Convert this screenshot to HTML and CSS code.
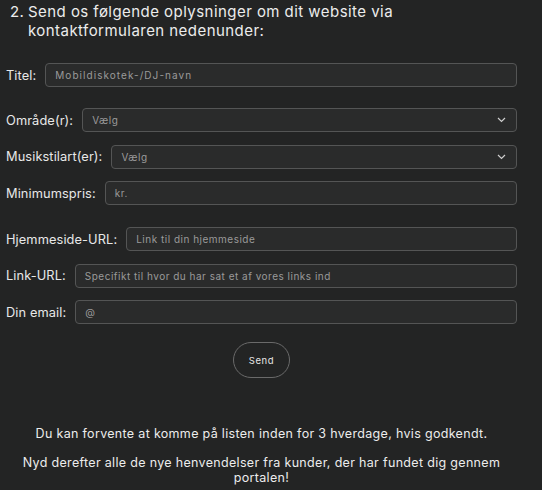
FILE: index.html
```html
<!DOCTYPE html>
<html lang="da">
<head>
<meta charset="utf-8">
<title>Kontaktformular</title>
<link rel="stylesheet" href="styles.css">
</head>
<body>
<div class="page">
  <div class="heading">
    <span class="num">2.</span>
    <span class="htext">Send os følgende oplysninger om dit website via kontaktformularen nedenunder:</span>
  </div>

  <form class="form">
    <div class="row r-titel">
      <label>Titel:</label>
      <div class="field"><span class="ph ph-wide">Mobildiskotek-/DJ-navn</span></div>
    </div>
    <div class="row r-omraade">
      <label>Område(r):</label>
      <div class="field select"><span class="ph">Vælg</span>
        <svg class="chev" width="9" height="6" viewBox="0 0 9 6"><path d="M1 1l3.5 3.5L8 1" fill="none" stroke="#cfcfcf" stroke-width="1.2"/></svg>
      </div>
    </div>
    <div class="row">
      <label>Musikstilart(er):</label>
      <div class="field select"><span class="ph">Vælg</span>
        <svg class="chev" width="9" height="6" viewBox="0 0 9 6"><path d="M1 1l3.5 3.5L8 1" fill="none" stroke="#cfcfcf" stroke-width="1.2"/></svg>
      </div>
    </div>
    <div class="row">
      <label>Minimumspris:</label>
      <div class="field"><span class="ph">kr.</span></div>
    </div>
    <div class="row r-spaced">
      <label>Hjemmeside-URL:</label>
      <div class="field"><span class="ph">Link til din hjemmeside</span></div>
    </div>
    <div class="row">
      <label>Link-URL:</label>
      <div class="field"><span class="ph">Specifikt til hvor du har sat et af vores links ind</span></div>
    </div>
    <div class="row">
      <label>Din email:</label>
      <div class="field"><span class="ph">@</span></div>
    </div>
    <div class="actions">
      <button type="button" class="send">Send</button>
    </div>
  </form>

  <div class="info">
    <p>Du kan forvente at komme på listen inden for 3 hverdage, hvis godkendt.</p>
    <p>Nyd derefter alle de nye henvendelser fra kunder, der har fundet dig gennem portalen!</p>
  </div>
</div>
</body>
</html>
```

FILE: styles.css
```css
html, body {
  margin: 0;
  padding: 0;
  background: #232424;
  color: #e6e6e6;
  font-family: Inter, "Noto Sans", sans-serif;
}

.page {
  width: 511px;
  padding-left: 6px;
}

.heading {
  display: flex;
  padding: 2px 0 0 4px;
  font-size: 15px;
  line-height: 19px;
  letter-spacing: 0.45px;
  color: #ececec;
}

.num {
  flex: 0 0 18px;
}

.htext {
  flex: 1;
  padding-right: 90px;
}

.form {
  display: flex;
  flex-direction: column;
}

.row {
  display: flex;
  align-items: center;
  gap: 9px;
  margin-top: 12.5px;
}

.r-titel { margin-top: 23px; }
.r-omraade { margin-top: 21px; }
.r-spaced { margin-top: 22px; }

.row label {
  font-size: 12.8px;
  letter-spacing: 0.1px;
  color: #e8e8e8;
  white-space: nowrap;
}

.field {
  flex: 1;
  height: 24px;
  box-sizing: border-box;
  border: 1px solid #545555;
  border-radius: 4px;
  background: #2a2b2b;
  display: flex;
  align-items: center;
  padding: 0 10px 0 9px;
}

.ph {
  font-size: 10px;
  letter-spacing: 0.5px;
  color: #9a9a9a;
  flex: 1;
}

.ph-wide {
  letter-spacing: 1.05px;
}

.chev {
  flex: 0 0 auto;
}

.actions {
  display: flex;
  justify-content: center;
  margin-top: 18px;
}

.send {
  width: 57px;
  height: 36px;
  border: 1px solid #6a6a6a;
  border-radius: 18px;
  background: transparent;
  color: #e6e6e6;
  font-family: Inter, "Noto Sans", sans-serif;
  font-size: 9.5px;
  letter-spacing: 0.6px;
  padding: 0;
}

.info {
  margin-top: 48px;
  text-align: center;
  font-size: 12.5px;
  line-height: 15px;
  letter-spacing: 0.32px;
  color: #ececec;
}

.info p {
  margin: 0 0 14px;
  padding: 0 10px;
}
```
